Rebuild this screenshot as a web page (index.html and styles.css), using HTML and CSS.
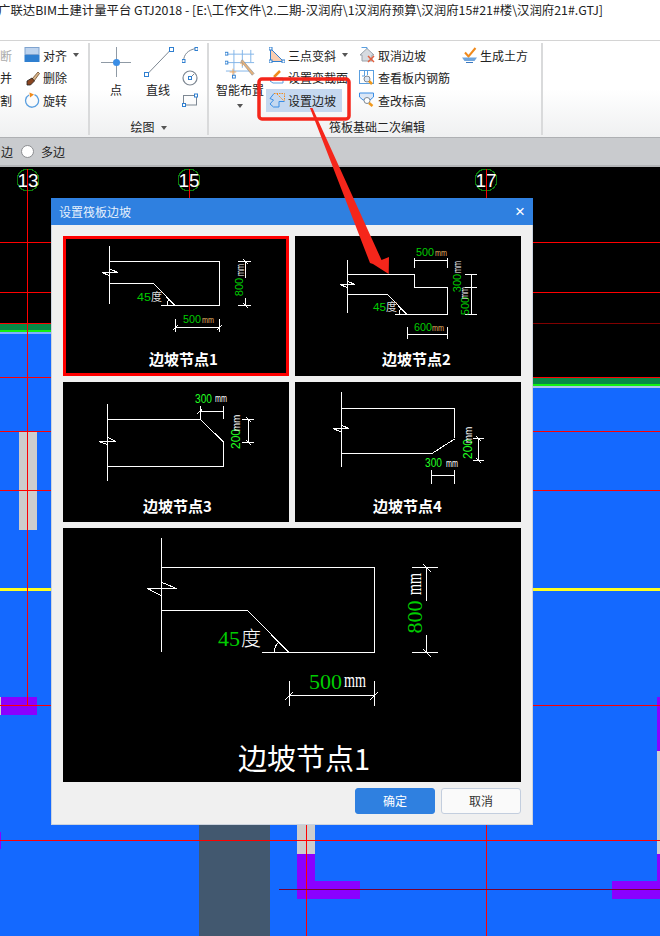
FILE: index.html
```html
<!DOCTYPE html>
<html lang="zh">
<head>
	<meta charset="utf-8">
	<title>设置筏板边坡</title>
	<link rel="stylesheet" href="styles.css">
</head>
<body>
<div class="titlebar"><span>广联达BIM土建计量平台 GTJ2018 - [E:\工作文件\2.二期-汉润府\1汉润府预算\汉润府15#21#楼\汉润府21#.GTJ]</span></div>

<!-- 功能区 -->
<div class="ribbon">
	<div class="group group-edit">
		<div class="group-body">
			<div class="tool-col col-cut">
				<div class="tool tool-off">断</div>
				<div class="tool">并</div>
				<div class="tool">割</div>
			</div>
			<div class="tool-col">
				<div class="tool">
					<svg class="ico" viewBox="0 0 16 16"><rect x="1" y="0.500" width="14" height="7" fill="#bdd3ee" stroke="#7fa3cf"/><rect x="0.500" y="8" width="15" height="7" fill="#2f7fd0"/></svg>
					<span>对齐</span><i class="caret"></i>
				</div>
				<div class="tool">
					<svg class="ico" viewBox="0 0 16 16"><path d="M8 9L14 2l1.500 1.500L10 11z" fill="#d9b48a" stroke="#6b4a2a" stroke-width=".8"/><path d="M3 11l5-3 2.500 3-4 4H3z" fill="#8a4520" stroke="#222" stroke-width=".8"/></svg>
					<span>删除</span>
				</div>
				<div class="tool">
					<svg class="ico" viewBox="0 0 16 16"><path d="M5 3A6.500 6.500 0 1 0 10.500 2.700" fill="none" stroke="#5a9fe0" stroke-width="1.300"/><path d="M5.500 0.500L10 2.500 6 5.500z" fill="#f08a1c"/></svg>
					<span>旋转</span>
				</div>
			</div>
		</div>
	</div>

	<div class="group group-draw">
		<div class="group-body">
			<div class="tool-big">
				<svg class="ico-big" viewBox="0 0 32 32"><path d="M16.500 1V31M1 16.500H31" stroke="#8f9aa5" fill="none"/><circle cx="16.500" cy="16.500" r="3.500" fill="#3a8ee6"/></svg>
				<span>点</span>
			</div>
			<div class="tool-big">
				<svg class="ico-big" viewBox="0 0 32 32"><path d="M4.500 29L29 3.500" stroke="#7d8792" fill="none"/><rect x="2.500" y="26.500" width="4" height="4" fill="#fff" stroke="#2f7fd0"/><rect x="27.500" y="1.500" width="4" height="4" fill="#fff" stroke="#2f7fd0"/></svg>
				<span>直线</span>
			</div>
			<div class="tool-col col-mini">
				<div class="tool"><svg class="ico" viewBox="0 0 16 16"><path d="M1.500 14C2 7 6 3 14 1.500" fill="none" stroke="#7d8792"/><rect x="0" y="12.500" width="3" height="3" fill="#fff" stroke="#2f7fd0"/><rect x="13" y="0.500" width="3" height="3" fill="#fff" stroke="#2f7fd0"/></svg></div>
				<div class="tool"><svg class="ico" viewBox="0 0 16 16"><circle cx="8" cy="8" r="7" fill="none" stroke="#7d8792" stroke-width="1.200"/><path d="M8 8L12 4" stroke="#7d8792"/><rect x="6.500" y="6.500" width="3" height="3" fill="#fff" stroke="#2f7fd0"/></svg></div>
				<div class="tool"><svg class="ico" viewBox="0 0 16 16"><rect x="1.500" y="3.500" width="13" height="9.500" fill="none" stroke="#7d8792"/><rect x="0.500" y="11.500" width="3" height="3" fill="#fff" stroke="#2f7fd0"/><rect x="12.500" y="2" width="3" height="3" fill="#fff" stroke="#2f7fd0"/></svg></div>
			</div>
		</div>
		<div class="group-label">绘图<i class="caret caret-label"></i></div>
	</div>

	<div class="group group-raft">
		<div class="group-body">
			<div class="tool-big tool-smart">
				<svg class="ico-smart" viewBox="0 0 32 32">
					<path d="M1 5.500H31M1 14.500H31M1 23.500H28M9.500 1V30M18.500 1V20M27.500 1V14" stroke="#7fb2e8" fill="none"/>
					<path d="M5 24.500H12M8.500 21V28M16 15H21M18.500 12.500V18" stroke="#f2a65a" fill="none"/>
					<path d="M17 13L18.500 11.500 31 26 29 28z" fill="#e8b27a" stroke="#8a8f96" stroke-width=".7"/>
					<rect x="0" y="3.500" width="3" height="3" fill="#fff" stroke="#2f7fd0"/><rect x="0" y="13" width="3" height="3" fill="#fff" stroke="#2f7fd0"/><rect x="8" y="28" width="3" height="3" fill="#fff" stroke="#2f7fd0"/>
				</svg>
				<span>智能布置</span>
				<i class="caret caret-big"></i>
			</div>
			<div class="tool-col col-a">
				<div class="tool">
					<svg class="ico" viewBox="0 0 16 16"><path d="M1.500 1.500L14.500 14.500H1.500z" fill="#f9cdb0" stroke="#2f7fd0"/><rect x="0" y="0" width="3" height="3" fill="#fff" stroke="#2f7fd0"/><rect x="0" y="13" width="3" height="3" fill="#fff" stroke="#2f7fd0"/><rect x="13" y="13" width="3" height="3" fill="#fff" stroke="#2f7fd0"/></svg>
					<span>三点变斜</span><i class="caret"></i>
				</div>
				<div class="tool">
					<svg class="ico" viewBox="0 0 16 16"><path d="M1 11l3-3h10v5H4z" fill="#fff" stroke="#5a9fe0"/><path d="M5 7L11 1" stroke="#f08a1c" stroke-width="2.500"/></svg>
					<span>设置变截面</span>
				</div>
				<div class="tool tool-on">
					<svg class="ico" viewBox="0 0 16 16"><path d="M5 1.500L1 6.500l3.500 1.500L1 12l3.500 3H10V9.500H15.500" fill="none" stroke="#3a8ee6"/><path d="M5 1.500H15.500V9M8 2L15 9" fill="none" stroke="#f08a1c" stroke-dasharray="1.500 1"/></svg>
					<span>设置边坡</span>
				</div>
			</div>
			<div class="tool-col col-b">
				<div class="tool">
					<svg class="ico" viewBox="0 0 16 16"><path d="M1 8L8 1.500 15 8H13V14H3V8z" fill="#d7dbe0" stroke="#9aa2aa"/><path d="M8 2V0.500H2.500" fill="none" stroke="#5a9fe0"/><path d="M9 9L15 15M15 9L9 15" stroke="#e2603f" stroke-width="1.500"/></svg>
					<span>取消边坡</span>
				</div>
				<div class="tool">
					<svg class="ico" viewBox="0 0 16 16"><rect x="0.500" y="0.500" width="14" height="13" fill="#fff" stroke="#5a9fe0"/><path d="M5.500 1V6H3M8.500 1V5" stroke="#5a9fe0" fill="none"/><circle cx="8" cy="9" r="3" fill="#dbe7f6" stroke="#7d8792"/><path d="M10 11l3 3" stroke="#f0981c" stroke-width="2.500"/></svg>
					<span>查看板内钢筋</span>
				</div>
				<div class="tool">
					<svg class="ico" viewBox="0 0 16 16"><path d="M0.500 1H14.500V5L11 8H4L0.500 5z" fill="#dbe7f6" stroke="#3a8ee6"/><circle cx="8" cy="8.500" r="3" fill="#fff" stroke="#7d8792"/><path d="M10 11l3.500 3" stroke="#f0981c" stroke-width="2.500"/></svg>
					<span>查改标高</span>
				</div>
			</div>
			<div class="tool-col col-c">
				<div class="tool">
					<svg class="ico ico-c" viewBox="0 0 15 16"><path d="M3 5.500L6.500 9.500 13.500 1" fill="none" stroke="#f08a1c" stroke-width="2"/><path d="M0 10.500H15L12.500 14H2.500z" fill="#6fa5dd"/><path d="M4 15.500H11" stroke="#3a78c0"/></svg>
					<span>生成土方</span>
				</div>
			</div>
		</div>
		<div class="group-label">筏板基础二次编辑</div>
	</div>
</div>

<div class="optbar">
	<span class="opt-cut">边</span>
	<i class="radio"></i>
	<span>多边</span>
</div>

<!-- 绘图区 -->
<div class="canvas">
	<svg class="plan" viewBox="0 167 660 769" width="660" height="769">
		<rect x="0" y="167" width="660" height="769" fill="#1469ff"/>
		<rect x="0" y="167" width="60" height="157" fill="#000"/>
		<rect x="60" y="167" width="600" height="211" fill="#000"/>
		<rect x="0" y="324" width="60" height="6" fill="#078a47"/>
		<rect x="0" y="330" width="60" height="2" fill="#12f012"/>
		<rect x="0" y="332" width="60" height="2" fill="#7fb0ff"/>
		<rect x="525" y="378" width="135" height="6" fill="#078a47"/>
		<rect x="525" y="384" width="135" height="2" fill="#12f012"/>
		<rect x="525" y="386" width="135" height="2" fill="#a9c4ee"/>
		<rect x="0" y="588" width="660" height="3" fill="#ffff22"/>
		<rect x="19" y="431" width="18" height="99" fill="#cdcdcd"/>
		<rect x="0" y="697" width="37" height="18" fill="#8a00ff"/>
		<rect x="0" y="697" width="1" height="18" fill="#cdcdcd"/>
		<rect x="0" y="832" width="1" height="17" fill="#8a00ff"/>
		<rect x="199" y="825" width="71" height="111" fill="#42586f"/>
		<rect x="297" y="825" width="18" height="29" fill="#cdcdcd"/>
		<rect x="297" y="854" width="18" height="45" fill="#8a00ff"/>
		<rect x="297" y="881" width="63" height="18" fill="#8a00ff"/>
		<rect x="612" y="881" width="48" height="18" fill="#8a00ff"/>
		<rect x="657" y="697" width="3" height="54" fill="#8a00ff"/>
		<rect x="657" y="751" width="3" height="103" fill="#cdcdcd"/>
		<rect x="657" y="854" width="3" height="45" fill="#8a00ff"/>
		<g stroke="#f00" fill="none">
			<path d="M0 242.500H660M0 292.500H660M0 323.500H60M0 377.500H660M0 431.500H660M0 490.500H660M0 705.500H660"/>
			<path d="M0 840.500H660" stroke-width="1.500"/>
			<path d="M27.500 170V705M189.500 170V200M486.500 170V200M306.500 825V936M486.500 825V936"/>
		</g>
		<path d="M60 323.500H660" stroke="#800000" fill="none"/>
		<path d="M279 889.500H660" stroke="#7a0030" fill="none"/>
		<g class="axis">
			<circle cx="28" cy="180" r="11"/><text x="28" y="187">13</text>
			<circle cx="189" cy="180" r="11"/><text x="189" y="187">15</text>
			<circle cx="486" cy="180" r="11"/><text x="486" y="187">17</text>
		</g>
		<path d="M27.500 169V192M189.500 169V192M486.500 169V192" stroke="#f00" fill="none"/>
	</svg>
</div>

<!-- 设置筏板边坡 对话框 -->
<div class="dialog">
	<div class="dialog-head"><span>设置筏板边坡</span><b class="dialog-close">×</b></div>
	<div class="nodes">
		<div class="node node-on">
			<svg class="sketch" viewBox="0 0 226 140" width="226" height="140">
				<path class="ln" d="M46.500 10V68M46.500 25.500H156.500V69.500H98M46.500 47.500H90.500L112 69.500M39 36.500H55L47 33M39 36.500L46 39.500M104 69.500C104 66 105 64 107 63"/>
				<path class="ln" d="M175 25.500H188M175 69.500H188M182.500 25.500V42M182.500 62V69.500M180 23L185 28M180 67L185 72M112.500 83V96M156.500 83V96M112.500 91.500H156.500M110 94L115 89M154 94L159 89"/>
				<text class="num-s" x="74" y="65" textLength="14" lengthAdjust="spacingAndGlyphs">45</text>
				<text class="cn-s" x="88" y="65">度</text>
				<text class="num-s" x="120" y="87" textLength="18" lengthAdjust="spacingAndGlyphs">500</text>
				<text class="unit-s" x="139" y="87" textLength="12" lengthAdjust="spacingAndGlyphs">mm</text>
				<text class="num-s" transform="translate(180 51) rotate(-90)" text-anchor="middle">800</text>
				<text class="unit-w" transform="translate(181 34) rotate(-90)" text-anchor="middle" textLength="12" lengthAdjust="spacingAndGlyphs">mm</text>
				<text class="cap" x="86" y="129">边坡节点1</text>
			</svg>
		</div>
		<div class="node">
			<svg class="sketch" viewBox="0 0 226 140" width="226" height="140">
				<path class="ln" d="M52.500 24V77M52.500 38.500H119.500V51.500H152.500V78.500H100M52.500 58.500H92.500L112 78.500M45 48.500H60L53 45.500M45 48.500L52 51.500M104 78C104 75 105 73 107 72"/>
				<path class="ln" d="M119.500 22V32M152.500 22V32M119.500 24.500H152.500M170 38.500H182M170 51.500H182M170 78.500H182M176.500 38.500V78.500M112.500 91V103M152.500 91V103M112.500 98.500H152.500"/>
				<text class="num-s" x="121" y="20" textLength="18" lengthAdjust="spacingAndGlyphs">500</text>
				<text class="unit-s" x="140" y="20" textLength="12" lengthAdjust="spacingAndGlyphs">mm</text>
				<text class="num-s" x="78" y="75" textLength="13" lengthAdjust="spacingAndGlyphs">45</text>
				<text class="cn-s" x="91" y="75">度</text>
				<text class="num-s" x="119" y="95" textLength="18" lengthAdjust="spacingAndGlyphs">600</text>
				<text class="unit-s" x="137" y="95" textLength="12" lengthAdjust="spacingAndGlyphs">mm</text>
				<text class="num-s" transform="translate(166 47) rotate(-90)" text-anchor="middle">300</text>
				<text class="unit-w" transform="translate(166 31) rotate(-90)" text-anchor="middle" textLength="12" lengthAdjust="spacingAndGlyphs">mm</text>
				<text class="num-s" transform="translate(174 70) rotate(-90)" text-anchor="middle">500</text>
				<text class="unit-w" transform="translate(173 57) rotate(-90)" text-anchor="middle" textLength="12" lengthAdjust="spacingAndGlyphs">mm</text>
				<text class="cap" x="87" y="129">边坡节点2</text>
			</svg>
		</div>
		<div class="node">
			<svg class="sketch" viewBox="0 0 226 140" width="226" height="140">
				<path class="ln" d="M44.500 22V98.500M44.500 37.500H137.500L160.500 60V84.500H44.500M36 59.500H53L45 55.500M36 59.500L44 62.500"/>
				<path class="ln" d="M137.500 24V37M160.500 24V37M137.500 29.500H160.500M134.500 31.500L139 27.500M179 37.500H191M179 60.500H191M185.500 37.500V60.500M183 35L188 40M183 58L188 63"/>
				<text class="num-b" x="132" y="21" textLength="17" lengthAdjust="spacingAndGlyphs">300</text>
				<text class="unit-w" x="152" y="20" textLength="12" lengthAdjust="spacingAndGlyphs">mm</text>
				<text class="num-b" transform="translate(177 57) rotate(-90)" text-anchor="middle">200</text>
				<text class="unit-w" transform="translate(177 41) rotate(-90)" text-anchor="middle">mm</text>
				<text class="cap" x="80" y="130">边坡节点3</text>
			</svg>
		</div>
		<div class="node">
			<svg class="sketch" viewBox="0 0 226 140" width="226" height="140">
				<path class="ln" d="M46.500 10V85M46.500 26.500H159.500V56M159.500 57L137 71.500H46.500M38 46.500H54L46 43M38 46.500L46 50"/>
				<path class="ln" d="M136.500 88V102M159.500 88V102M136.500 93.500H159.500M178 56.500H189M178 78.500H189M183.500 56.500V78.500M181 54L186 59M181 76L186 81"/>
				<text class="num-b" x="130" y="85" textLength="17" lengthAdjust="spacingAndGlyphs">300</text>
				<text class="unit-w" x="151" y="85" textLength="12" lengthAdjust="spacingAndGlyphs">mm</text>
				<text class="num-b" transform="translate(177 67) rotate(-90)" text-anchor="middle">200</text>
				<text class="unit-w" transform="translate(177 53) rotate(-90)" text-anchor="middle">mm</text>
				<text class="cap" x="78" y="130">边坡节点4</text>
			</svg>
		</div>
		<div class="node node-wide">
			<svg class="sketch" viewBox="0 0 458 254" width="458" height="254">
				<path class="ln" d="M98.500 10V124M98.500 39.500H311.500V124.500H199M98.500 82.500H184.500L226 124.500M84.500 60.500H113.500L99 54.500M84.500 60.500L98 67.500M211.500 124C211.500 119 213 116 216 114"/>
				<path class="ln" d="M349 39.500H375M349 124.500H375M363.500 39.500V73M363.500 107V124.500M360 36L368 44M360 121L368 129M226.500 153V178M311.500 153V178M226.500 167.500H311.500M222 172L230 164M307 172L315 164"/>
				<text class="num-l" x="155" y="118">45</text>
				<text class="cn-l" x="178" y="118">度</text>
				<text class="num-l" x="246" y="161">500</text>
				<text class="unit-l" x="281" y="159" textLength="22" lengthAdjust="spacingAndGlyphs">mm</text>
				<text class="num-l" transform="translate(359 89) rotate(-90)" text-anchor="middle">800</text>
				<text class="unit-l" transform="translate(358 56) rotate(-90)" text-anchor="middle" textLength="22" lengthAdjust="spacingAndGlyphs">mm</text>
				<text class="cap-l" x="175" y="242">边坡节点1</text>
			</svg>
		</div>
	</div>
	<div class="dialog-foot">
		<div class="btn btn-ok">确定</div>
		<div class="btn">取消</div>
	</div>
</div>

<!-- 截图上的红色标注 -->
<svg class="markup" viewBox="0 0 660 936" width="660" height="936">
	<rect x="259" y="79" width="90" height="40" rx="3" fill="none" stroke="#f5261b" stroke-width="3.500"/>
	<polygon points="310,108 312.500,108 381.500,260 389,257 388.700,274 373,264 370,263" fill="#f5261b"/>
</svg>
</body>
</html>
```

FILE: styles.css
```css
* {
	box-sizing: border-box;
}
html, body {
	margin: 0;
	height: 936px;
	overflow: hidden;
}
body {
	position: relative;
	width: 660px;
	background: #fff;
	color: #222;
	font-family: "Noto Sans CJK SC", "Liberation Sans", sans-serif;
	font-size: 12px;
}

/* 标题栏 */
.titlebar {
	height: 40px;
	padding-top: 2px;
	background: #fff;
	line-height: 17px;
	font-size: 12.4px;
	white-space: nowrap;
	overflow: hidden;
}
.titlebar span {
	display: block;
	margin-left: -2px;
}

/* 功能区 */
.ribbon {
	display: flex;
	height: 98px;
	border-top: 1px solid #d4d4d4;
	border-bottom: 1px solid #aeb0b3;
	background: linear-gradient(#fff 50%, #eff0f1);
}
.group {
	display: flex;
	flex-direction: column;
	height: 92px;
	border-right: 2px solid #d9dadb;
	margin: 2px 0;
}
.group-edit {
	width: 90px;
}
.group-draw {
	width: 119px;
}
.group-raft {
	width: 334px;
}
.group-body {
	display: flex;
	height: 72px;
	padding-top: 1px;
	overflow: hidden;
}
.group-edit .group-body {
	justify-content: flex-end;
	padding-right: 6px;
}
.group-draw .group-body {
	padding-left: 10px;
	gap: 10px;
}
.group-raft .group-body {
	padding-left: 7px;
}
.group-label {
	height: 20px;
	line-height: 23px;
	text-align: center;
}
.group-raft .group-label {
	padding-left: 4px;
}
.tool-col {
	display: flex;
	flex-direction: column;
	flex: none;
}
.col-cut {
	margin-right: 6px;
}
.col-mini {
	margin-left: -5px;
}
.col-a {
	width: 90px;
	margin-left: 2px;
}
.col-b {
	width: 103px;
}
.tool {
	display: flex;
	align-items: center;
	gap: 3px;
	height: 22.5px;
	padding: 0 3px 0 3px;
	white-space: nowrap;
}
.tool-off {
	color: #aaa;
}
.tool-on {
	width: 76px;
	background: #c5d8f0;
}
.ico {
	flex: none;
	width: 16px;
	height: 16px;
}
.ico-c {
	width: 15px;
}
.tool-big {
	display: flex;
	flex-direction: column;
	align-items: center;
	flex: none;
	width: 32px;
}
.tool-big span {
	line-height: 20px;
	margin-top: 2px;
}
.tool-smart {
	width: 48px;
}
.tool-smart span {
	margin-top: 1px;
}
.ico-big {
	width: 32px;
	height: 32px;
	margin-top: 2px;
}
.ico-smart {
	width: 30px;
	height: 30px;
	margin-top: 5px;
}
.caret {
	display: inline-block;
	width: 0;
	height: 0;
	margin-left: 3px;
	border: 3px solid transparent;
	border-top: 4px solid #555;
	border-bottom: 0;
}
.caret-label {
	margin-left: 6px;
	vertical-align: 2px;
}
.caret-big {
	margin: 4px 0 0;
}

/* 选项条 */
.optbar {
	display: flex;
	align-items: center;
	height: 29px;
	background: #c9cbce;
	border-bottom: 2px solid #b3b5b8;
	white-space: nowrap;
}
.opt-cut {
	width: 21px;
	margin-left: 1px;
	flex: none;
}
.radio {
	flex: none;
	width: 13px;
	height: 13px;
	margin-right: 7px;
	margin-left: -1px;
	border: 1px solid #8b8d90;
	border-radius: 50%;
	background: #fff;
}

/* 绘图区 */
.canvas {
	height: 769px;
	overflow: hidden;
}
.plan {
	display: block;
	shape-rendering: crispEdges;
}
.axis circle {
	fill: none;
	stroke: #0b7d0b;
}
.axis text {
	fill: #fff;
	font-family: "Liberation Sans", sans-serif;
	font-size: 19px;
	text-anchor: middle;
}

/* 对话框 */
.dialog {
	position: absolute;
	left: 51px;
	top: 198px;
	width: 482px;
	height: 627px;
	background: #f0f0f0;
	border: 1px solid #ccd3de;
	border-top: 0;
}
.dialog-head {
	display: flex;
	justify-content: space-between;
	align-items: center;
	height: 27px;
	margin: 0 -1px;
	padding: 0 8px;
	background: #2f80e0;
	color: #e6f0fc;
}
.dialog-close {
	color: #fff;
	font-family: "Liberation Sans", sans-serif;
	font-size: 17px;
	font-weight: normal;
}
.nodes {
	display: grid;
	grid-template-columns: 226px 226px;
	gap: 6px;
	padding: 11px 11px 0;
}
.node {
	position: relative;
	height: 140px;
	background: #000;
}
.node-on {
	outline: 3px solid #f00;
	outline-offset: -3px;
}
.node-wide {
	grid-column: span 2;
	height: 254px;
}
.sketch {
	display: block;
}
.ln {
	fill: none;
	stroke: #fff;
	stroke-width: 1;
	shape-rendering: crispEdges;
}
.num-s {
	fill: #0c0;
	font-family: "Liberation Sans", sans-serif;
	font-size: 11px;
}
.num-b {
	fill: #2f2;
	font-family: "Liberation Sans", sans-serif;
	font-size: 12px;
}
.num-l {
	fill: #0c0;
	font-family: "Liberation Serif", serif;
	font-size: 22px;
}
.unit-s {
	fill: #e8b060;
	font-family: "Liberation Sans", sans-serif;
	font-size: 9px;
}
.unit-w {
	fill: #fff;
	font-family: "Liberation Sans", sans-serif;
	font-size: 10px;
}
.unit-l {
	fill: #fff;
	font-family: "Liberation Serif", serif;
	font-size: 22px;
}
.cn-s {
	fill: #ddd;
	font-size: 11px;
}
.cn-l {
	fill: #fff;
	font-size: 20px;
	font-weight: 300;
}
.cap {
	fill: #fff;
	font-family: "Noto Sans CJK SC", sans-serif;
	font-size: 15px;
	font-weight: bold;
}
.cap-l {
	fill: #fff;
	font-family: "Noto Sans CJK SC", sans-serif;
	font-size: 29px;
}
.dialog-foot {
	display: flex;
	justify-content: flex-end;
	gap: 6px;
	padding: 6px 11px 0;
}
.btn {
	width: 80px;
	height: 26px;
	border: 1px solid #c3cede;
	border-radius: 3px;
	background: #fafafa;
	color: #333;
	line-height: 24px;
	text-align: center;
}
.btn-ok {
	border-color: #2f80e0;
	background: #2f80e0;
	color: #fff;
}

/* 标注 */
.markup {
	position: absolute;
	left: 0;
	top: 0;
	pointer-events: none;
}
```
